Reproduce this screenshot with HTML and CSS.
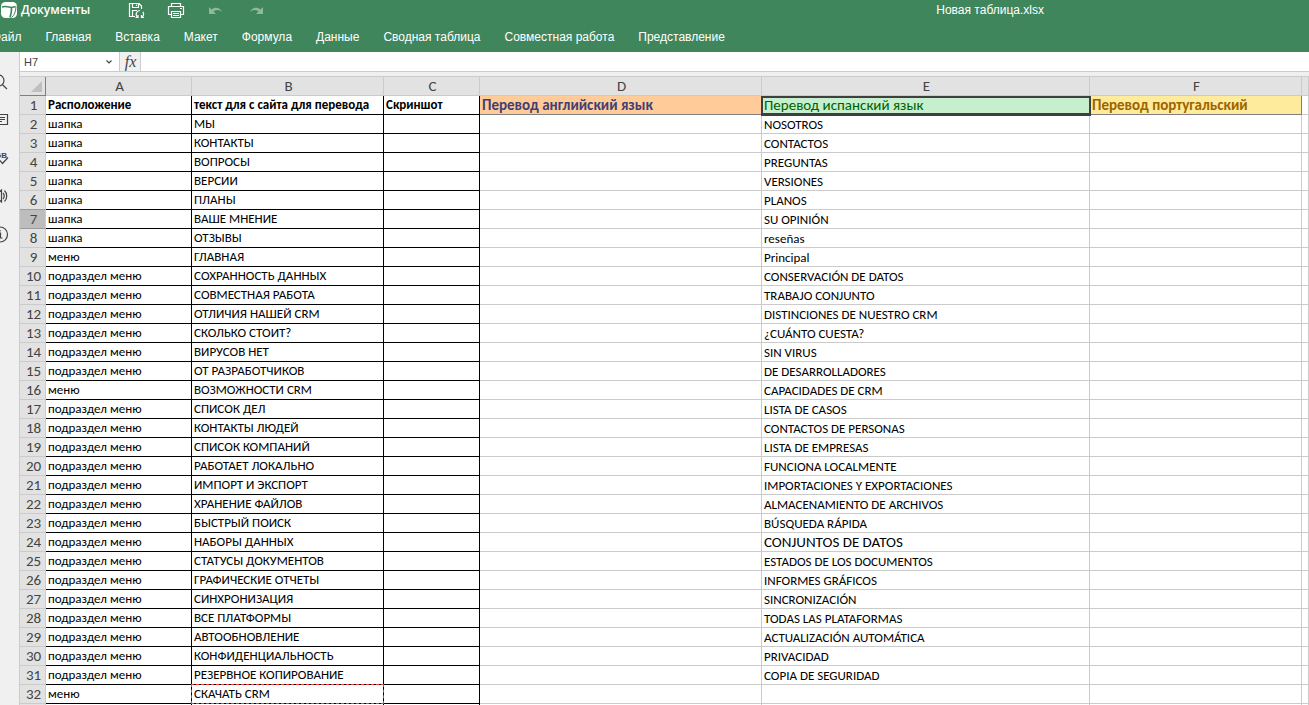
FILE: index.html
```html
<!DOCTYPE html>
<html lang="ru">
<head>
<meta charset="utf-8">
<title>Новая таблица.xlsx</title>
<link rel="stylesheet" href="styles.css">
</head>
<body>
<header class="top">
  <div class="titlebar">
    <a class="brand" href="#">
      <svg width="16" height="16" viewBox="0 0 16 16" aria-hidden="true"><rect width="16" height="16" rx="4.5" fill="#fff"/><path d="M1 5C4 3.800 8 5 10.500 5.500C10.800 9 10 12 9 15.500M10.500 5.500L14.500 4.500" fill="none" stroke="#40865c" stroke-width="1.600"/><path d="M15 4.500C14.800 9.500 13.500 13 10.500 15.500" fill="none" stroke="#40865c" stroke-width="1"/></svg>
      <span>Документы</span>
    </a>
    <button class="tool" type="button" aria-label="Сохранить">
      <svg width="18" height="18" viewBox="0 0 18 18" fill="none" stroke="#fff" stroke-width="1.200"><path d="M8 15.500H2.500V2.500H12L14.500 5V8M5.500 2.500V6.500H11.500V2.500M9.500 3.500V5M5.500 15.500V9.500H10"/><path d="M10.500 16A3.700 3.700 0 0 1 13 9.500M15.800 10.800A3.700 3.700 0 0 1 14.500 16.500"/><path d="M8.500 16.500H11V14M17 16.500H14.500V14"/></svg>
    </button>
    <button class="tool" type="button" aria-label="Печать">
      <svg width="18" height="18" viewBox="0 0 18 18" fill="none" stroke="#fff" stroke-width="1.200"><path d="M4.500 5.500V2.500H13.500V5.500M4.500 13.500H1.500V5.500H16.500V13.500H13.500M4.500 10.500H13.500V16.500H4.500ZM6 12.500H12M6 14.500H12M13 7.500H15"/></svg>
    </button>
    <button class="tool" type="button" aria-label="Отменить" disabled>
      <svg width="16" height="10" viewBox="0 0 16 10"><path d="M1 2V9H8L5.500 6.500C8.500 4.300 12 4.800 14.500 7.500C12.500 2.500 7 1.500 3.500 4.500Z" fill="#8fb99f"/></svg>
    </button>
    <button class="tool" type="button" aria-label="Повторить" disabled>
      <svg width="16" height="10" viewBox="0 0 16 10"><path d="M15 2V9H8L10.500 6.500C7.500 4.300 4 4.800 1.500 7.500C3.500 2.500 9 1.500 12.500 4.500Z" fill="#8fb99f"/></svg>
    </button>
    <span class="doc-name">Новая таблица.xlsx</span>
  </div>
  <nav class="tabs">
    <a href="#">Файл</a><a href="#">Главная</a><a href="#">Вставка</a><a href="#">Макет</a><a href="#">Формула</a><a href="#">Данные</a><a href="#">Сводная таблица</a><a href="#">Совместная работа</a><a href="#">Представление</a>
  </nav>
</header>
<div class="workspace">
  <aside class="side">
    <button type="button" aria-label="Поиск"><svg width="20" height="20" viewBox="0 0 20 20"><circle cx="8.500" cy="8.500" r="5.500"/><path d="M12.300 12.500L17 17"/></svg></button>
    <button type="button" aria-label="Комментарии"><svg width="20" height="20" viewBox="0 0 20 20"><path d="M3 4.500H17.500V14.500H8L5 17V14.500H3ZM6 7.500H15M6 9.500H15M6 11.500H12"/></svg></button>
    <button type="button" aria-label="Орфография"><svg width="20" height="20" viewBox="0 0 20 20"><text class="abc" x="5" y="10">GB</text><path d="M9.500 12L12.500 15.500L18 9.500"/></svg></button>
    <button type="button" aria-label="Звук"><svg width="20" height="20" viewBox="0 0 20 20"><path d="M4 8H7L11.500 4V16L7 12H4ZM13 7C14.500 8.800 14.500 11.200 13 13M14.500 4.500C17.500 7.500 17.500 12.500 14.500 15.500"/></svg></button>
    <button type="button" aria-label="О программе"><svg width="20" height="20" viewBox="0 0 20 20"><circle cx="10" cy="10.500" r="7.500"/><path d="M8.500 9H10.500V14M8.500 14H12.500M10 6V7.500"/></svg></button>
  </aside>
  <main class="main">
    <div class="formula-bar">
      <label class="name-box"><input type="text" value="H7" aria-label="Имя ячейки"><svg width="8" height="6" viewBox="0 0 8 6"><path d="M1.500 1.500L4 4L6.500 1.500" fill="none" stroke="#444" stroke-width="1.200"/></svg></label>
      <button class="fx" type="button">fx</button>
      <input class="formula" type="text" aria-label="Формула">
    </div>
    <div class="sheet">
    <table>
      <colgroup><col class="w-num"><col class="w-a"><col class="w-b"><col class="w-c"><col class="w-d"><col class="w-e"><col class="w-f"><col></colgroup>
      <thead><tr><th class="corner"><svg width="11" height="11" viewBox="0 0 11 11"><path d="M11 0V11H0Z" fill="#bfbfbf"/></svg></th><th>A</th><th>B</th><th>C</th><th>D</th><th>E</th><th>F</th><th></th></tr></thead>
      <tbody>
        <tr class="heads"><th>1</th><td>Расположение</td><td>текст для с сайта для перевода</td><td>Скриншот</td><td class="english">Перевод английский язык</td><td class="spanish">Перевод испанский язык</td><td class="portuguese">Перевод португальский</td><td></td></tr>
        <tr><th>2</th><td>шапка</td><td>МЫ</td><td></td><td></td><td>NOSOTROS</td><td></td><td></td></tr>
        <tr><th>3</th><td>шапка</td><td>КОНТАКТЫ</td><td></td><td></td><td>CONTACTOS</td><td></td><td></td></tr>
        <tr><th>4</th><td>шапка</td><td>ВОПРОСЫ</td><td></td><td></td><td>PREGUNTAS</td><td></td><td></td></tr>
        <tr><th>5</th><td>шапка</td><td>ВЕРСИИ</td><td></td><td></td><td>VERSIONES</td><td></td><td></td></tr>
        <tr class="before-current"><th>6</th><td>шапка</td><td>ПЛАНЫ</td><td></td><td></td><td>PLANOS</td><td></td><td></td></tr>
        <tr class="current"><th>7</th><td>шапка</td><td>ВАШЕ МНЕНИЕ</td><td></td><td></td><td>SU OPINIÓN</td><td></td><td></td></tr>
        <tr><th>8</th><td>шапка</td><td>ОТЗЫВЫ</td><td></td><td></td><td>reseñas</td><td></td><td></td></tr>
        <tr><th>9</th><td>меню</td><td>ГЛАВНАЯ</td><td></td><td></td><td>Principal</td><td></td><td></td></tr>
        <tr><th>10</th><td>подраздел меню</td><td>СОХРАННОСТЬ ДАННЫХ</td><td></td><td></td><td>CONSERVACIÓN DE DATOS</td><td></td><td></td></tr>
        <tr><th>11</th><td>подраздел меню</td><td>СОВМЕСТНАЯ РАБОТА</td><td></td><td></td><td>TRABAJO CONJUNTO</td><td></td><td></td></tr>
        <tr><th>12</th><td>подраздел меню</td><td>ОТЛИЧИЯ НАШЕЙ CRM</td><td></td><td></td><td>DISTINCIONES DE NUESTRO CRM</td><td></td><td></td></tr>
        <tr><th>13</th><td>подраздел меню</td><td>СКОЛЬКО СТОИТ?</td><td></td><td></td><td>¿CUÁNTO CUESTA?</td><td></td><td></td></tr>
        <tr><th>14</th><td>подраздел меню</td><td>ВИРУСОВ НЕТ</td><td></td><td></td><td>SIN VIRUS</td><td></td><td></td></tr>
        <tr><th>15</th><td>подраздел меню</td><td>ОТ РАЗРАБОТЧИКОВ</td><td></td><td></td><td>DE DESARROLLADORES</td><td></td><td></td></tr>
        <tr><th>16</th><td>меню</td><td>ВОЗМОЖНОСТИ CRM</td><td></td><td></td><td>CAPACIDADES DE CRM</td><td></td><td></td></tr>
        <tr><th>17</th><td>подраздел меню</td><td>СПИСОК ДЕЛ</td><td></td><td></td><td>LISTA DE CASOS</td><td></td><td></td></tr>
        <tr><th>18</th><td>подраздел меню</td><td>КОНТАКТЫ ЛЮДЕЙ</td><td></td><td></td><td>CONTACTOS DE PERSONAS</td><td></td><td></td></tr>
        <tr><th>19</th><td>подраздел меню</td><td>СПИСОК КОМПАНИЙ</td><td></td><td></td><td>LISTA DE EMPRESAS</td><td></td><td></td></tr>
        <tr><th>20</th><td>подраздел меню</td><td>РАБОТАЕТ ЛОКАЛЬНО</td><td></td><td></td><td>FUNCIONA LOCALMENTE</td><td></td><td></td></tr>
        <tr><th>21</th><td>подраздел меню</td><td>ИМПОРТ И ЭКСПОРТ</td><td></td><td></td><td>IMPORTACIONES Y EXPORTACIONES</td><td></td><td></td></tr>
        <tr><th>22</th><td>подраздел меню</td><td>ХРАНЕНИЕ ФАЙЛОВ</td><td></td><td></td><td>ALMACENAMIENTO DE ARCHIVOS</td><td></td><td></td></tr>
        <tr><th>23</th><td>подраздел меню</td><td>БЫСТРЫЙ ПОИСК</td><td></td><td></td><td>BÚSQUEDA RÁPIDA</td><td></td><td></td></tr>
        <tr><th>24</th><td>подраздел меню</td><td>НАБОРЫ ДАННЫХ</td><td></td><td></td><td class="large">CONJUNTOS DE DATOS</td><td></td><td></td></tr>
        <tr><th>25</th><td>подраздел меню</td><td>СТАТУСЫ ДОКУМЕНТОВ</td><td></td><td></td><td>ESTADOS DE LOS DOCUMENTOS</td><td></td><td></td></tr>
        <tr><th>26</th><td>подраздел меню</td><td>ГРАФИЧЕСКИЕ ОТЧЕТЫ</td><td></td><td></td><td>INFORMES GRÁFICOS</td><td></td><td></td></tr>
        <tr><th>27</th><td>подраздел меню</td><td>СИНХРОНИЗАЦИЯ</td><td></td><td></td><td>SINCRONIZACIÓN</td><td></td><td></td></tr>
        <tr><th>28</th><td>подраздел меню</td><td>ВСЕ ПЛАТФОРМЫ</td><td></td><td></td><td>TODAS LAS PLATAFORMAS</td><td></td><td></td></tr>
        <tr><th>29</th><td>подраздел меню</td><td>АВТООБНОВЛЕНИЕ</td><td></td><td></td><td>ACTUALIZACIÓN AUTOMÁTICA</td><td></td><td></td></tr>
        <tr><th>30</th><td>подраздел меню</td><td>КОНФИДЕНЦИАЛЬНОСТЬ</td><td></td><td></td><td>PRIVACIDAD</td><td></td><td></td></tr>
        <tr><th>31</th><td>подраздел меню</td><td>РЕЗЕРВНОЕ КОПИРОВАНИЕ</td><td></td><td></td><td>COPIA DE SEGURIDAD</td><td></td><td></td></tr>
        <tr><th>32</th><td>меню</td><td class="copied">СКАЧАТЬ CRM</td><td></td><td></td><td></td><td></td><td></td></tr>
        <tr><th></th><td></td><td></td><td></td><td></td><td></td><td></td><td></td></tr>
      </tbody>
    </table>
    </div>
  </main>
</div>
</body>
</html>
```
FILE: styles.css
```css
* { box-sizing: border-box; }
body {
  margin: 0;
  height: 100vh;
  overflow: hidden;
  display: flex;
  flex-direction: column;
  font: 12px "Liberation Sans", Arial, sans-serif;
  background: #fff;
}
button { border: 0; padding: 0; background: none; }
input { border: 0; padding: 0; outline: 0; min-width: 0; background: #fff; }

.top { background: #40865c; color: #fff; overflow: hidden; flex: none; }
.titlebar { display: flex; align-items: center; height: 20px; }
.brand {
  display: flex;
  align-items: center;
  gap: 4px;
  width: 116px;
  padding-left: 1px;
  color: #fff;
  text-decoration: none;
  font: 600 12px/20px "Open Sans", sans-serif;
}
.tool { display: flex; align-items: center; justify-content: center; width: 40px; height: 20px; }
.doc-name { margin-left: auto; margin-right: 265px; }
.tabs { display: flex; gap: 24px; height: 32px; margin-left: -8px; line-height: 34px; }
.tabs a { color: #fff; text-decoration: none; white-space: nowrap; }

.workspace { display: flex; flex: 1; min-height: 0; }
.side {
  width: 20px;
  flex: none;
  padding-top: 11px;
  overflow: hidden;
  background: #f0f0f0;
  border-right: 1px solid #cbcbcb;
}
.side button {
  display: flex;
  align-items: center;
  justify-content: center;
  width: 40px;
  height: 38px;
  margin-left: -20px;
}
.side svg { fill: none; stroke: #444; stroke-width: 1.2; }
.side .abc { font: bold 8px "Liberation Sans", sans-serif; fill: #444; stroke: none; }

.main { flex: 1; min-width: 0; display: flex; flex-direction: column; background: #f0f0f0; }
.formula-bar { display: flex; height: 20px; border-bottom: 1px solid #cbcbcb; background: #fff; flex: none; }
.name-box { display: flex; align-items: center; width: 99px; padding: 0 6px 0 4px; }
.name-box input { flex: 1; font: 11px "Liberation Sans", sans-serif; color: #444; }
.fx {
  width: 22px;
  padding-left: 1px;
  border: solid #cbcbcb;
  border-width: 0 1px;
  background: #f0f0f0;
  color: #444;
  font: italic 16px/18px "Liberation Serif", serif;
}
.formula { flex: 1; }

.sheet { flex: 1; min-height: 0; margin-top: 4px; overflow: hidden; background: #fff; }
table {
  width: 100%;
  table-layout: fixed;
  border-spacing: 0;
  border-top: 1px solid #cbcbcb;
  font: 13px/16px Carlito, Lato, sans-serif;
  color: #000;
}
.w-num { width: 26px; }
.w-a { width: 146px; }
.w-b { width: 192px; }
.w-c { width: 96px; }
.w-d { width: 282px; }
.w-e { width: 328px; }
.w-f { width: 212px; }
th, td {
  height: 19px;
  padding: 2px 2px 0;
  border: solid #cbcbcb;
  border-width: 0 1px 1px 0;
  white-space: nowrap;
  text-align: left;
  vertical-align: middle;
}
th {
  padding: 0 0 0 2px;
  background: #e2e2e2;
  color: #444;
  font-size: 15px;
  font-weight: normal;
  line-height: 18px;
  text-align: center;
}
.corner { border-color: #7d8b45; padding-right: 3px; }
.corner svg { display: block; margin-left: auto; }
tbody td:nth-child(-n+4) { border-color: #000; padding-top: 0; }
.before-current th { border-bottom-color: #9c9c9c; }
.current th { background: #bdbdbd; border-bottom-color: #9c9c9c; }

.heads td { font-weight: bold; }
.heads .english, .heads .spanish, .heads .portuguese { border-color: #7f7f7f; padding-top: 0; font-size: 15px; }
.heads .english { background: #fc9; color: #3f3f76; }
.heads .spanish { position: relative; background: #c6efce; color: #006100; font-weight: normal; }
.heads .portuguese { background: #ffeb9c; color: #9c6500; }
.spanish::after {
  content: "";
  position: absolute;
  inset: 0 -2px -2px -1px;
  border: 2px solid #3f3f3f;
  border-bottom-width: 3px;
}
td.large { padding-top: 0; font-size: 15px; }
.copied { position: relative; }
.copied::after {
  content: "";
  position: absolute;
  inset: -1px;
  border: 1px dashed #f33;
}
```
